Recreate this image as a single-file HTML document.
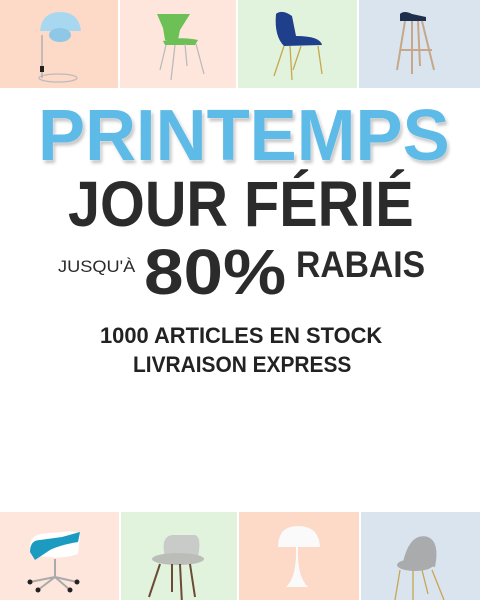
<!DOCTYPE html>
<html><head><meta charset="utf-8"><style>
*{margin:0;padding:0;box-sizing:border-box}
body{width:480px;height:600px;background:#fff;position:relative;overflow:hidden;font-family:"Liberation Sans",sans-serif;font-weight:bold}
.t{position:absolute}
.l{position:absolute;white-space:nowrap;transform-origin:0 0;line-height:1}
</style></head><body>
<div class="t" style="left:0;top:0;width:118px;height:88px;background:#fdd9c7"></div>
<div class="t" style="left:120px;top:0;width:116px;height:88px;background:#fee6dc"></div>
<div class="t" style="left:238px;top:0;width:119px;height:88px;background:#e1f3dc"></div>
<div class="t" style="left:359px;top:0;width:121px;height:88px;background:#d9e4ee"></div>
<div class="t" style="left:0;top:512px;width:119px;height:88px;background:#fee6dc"></div>
<div class="t" style="left:121px;top:512px;width:116px;height:88px;background:#e1f3dc"></div>
<div class="t" style="left:239px;top:512px;width:120px;height:88px;background:#fdd9c7"></div>
<div class="t" style="left:361px;top:512px;width:119px;height:88px;background:#d9e4ee"></div>
<svg class="t" style="left:0;top:0" width="480" height="88">
<ellipse cx="58" cy="78" rx="19" ry="4" fill="none" stroke="#bbb" stroke-width="1.3"/>
<line x1="42" y1="35" x2="42" y2="78" stroke="#aaa" stroke-width="1.3"/>
<rect x="40" y="66" width="4" height="6" fill="#222"/>
<path d="M40 31 Q42 12 60 12 Q79 12 81 31 Z" fill="#a8d8f0"/>
<ellipse cx="60" cy="35" rx="11" ry="7" fill="#8fc8e6"/>
<path d="M157 14 L190 14 L180 30 L178 40 L165 40 L163 28 Z" fill="#6cc055"/>
<path d="M163 41 Q180 36 198 40 L195 45 L165 45 Z" fill="#6cc055"/>
<path d="M166 45 L160 70 M175 45 L171 80 M185 44 L187 66 M196 44 L204 74" stroke="#bbb" stroke-width="1.3"/>
<path d="M276 14 Q282 9 292 16 L296 36 Q320 36 322 45 L284 46 Q274 36 276 14Z" fill="#1f3f8a"/>
<path d="M284 46 L274 76 M290 46 L292 80 M301 46 L293 70 M318 46 L322 74" stroke="#c9a650" stroke-width="1.3"/>
<path d="M400 14 Q404 10 412 14 L426 17 L426 21 L400 21Z" fill="#1e2f4e"/>
<path d="M405 21 L397 70 M422 21 L434 70 M412 21 L412 74 M418 21 L420 66 M400 50 L432 50" stroke="#c7a789" stroke-width="2"/>
</svg>
<svg class="t" style="left:0;top:512px" width="480" height="88">
<path d="M30 40 Q28 25 40 22 L62 20 Q80 18 80 24 L78 42 Q60 48 40 44Z" fill="#fff"/>
<path d="M30 40 Q30 28 40 28 L62 25 L80 20 L78 30 Q60 33 50 38 L35 48Z" fill="#1a9bbf"/>
<path d="M55 47 L55 65 M55 65 L30 70 M55 65 L38 78 M55 65 L70 78 M55 65 L77 70" stroke="#aaa" stroke-width="2"/>
<circle cx="30" cy="70" r="2.5" fill="#222"/><circle cx="38" cy="78" r="2.5" fill="#222"/><circle cx="70" cy="78" r="2.5" fill="#222"/><circle cx="77" cy="70" r="2.5" fill="#222"/>
<path d="M165 45 Q160 25 172 23 L195 23 Q202 25 198 45Z" fill="#c9cbc8"/>
<ellipse cx="178" cy="47" rx="26" ry="6" fill="#bbbdb9"/>
<path d="M160 52 L149 85 M172 52 L172 80 M180 52 L182 92 M190 52 L195 85" stroke="#6b4a36" stroke-width="2"/>
<path d="M278 35 Q278 14 298 14 Q319 14 320 35Z" fill="#fafafa"/>
<path d="M296 35 L298 35 Q297 65 308 75 L286 75 Q297 65 296 35Z" fill="#fafafa"/>
<path d="M403 50 Q410 20 428 25 Q440 30 435 55Z" fill="#a9abad"/>
<ellipse cx="415" cy="53" rx="18" ry="6" fill="#a9abad"/>
<path d="M400 58 L395 88 M413 58 L413 92 M422 58 L428 82 M432 58 L444 88" stroke="#c9a650" stroke-width="1.3"/>
</svg>
<div class="l" style="left:38px;top:100px;font-size:72px;color:#5ebae6;text-shadow:0 0 2px #fff,2px 3px 3px rgba(0,0,0,.25);transform:scaleX(0.98)">PRINTEMPS</div>
<div class="l" style="left:68px;top:172px;font-size:64px;color:#2b2b2b;transform:scaleX(0.90)">JOUR FÉRIÉ</div>
<div class="l" style="left:58px;top:258px;font-size:17px;font-weight:normal;color:#2b2b2b;transform:scaleX(1.07)">JUSQU'À</div>
<div class="l" style="left:144px;top:240px;font-size:64px;color:#2b2b2b;transform:scaleX(1.11)">80%</div>
<div class="l" style="left:296px;top:246px;font-size:37px;color:#2b2b2b;transform:scaleX(0.91)">RABAIS</div>
<div class="l" style="left:100px;top:325px;font-size:22px;color:#222;transform:scaleX(0.995)">1000 ARTICLES EN STOCK</div>
<div class="l" style="left:133px;top:354px;font-size:22px;color:#222;transform:scaleX(0.95)">LIVRAISON EXPRESS</div>
</body></html>
